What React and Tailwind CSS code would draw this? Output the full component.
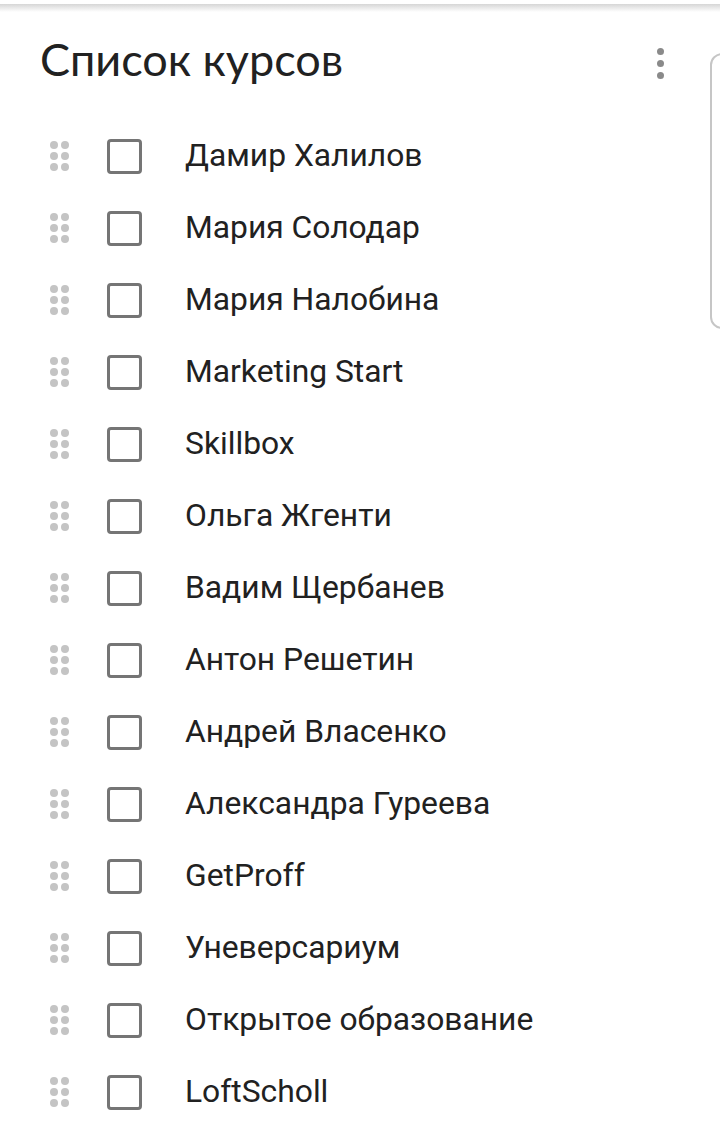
import React from "react";

const courses = [
  "Дамир Халилов",
  "Мария Солодар",
  "Мария Налобина",
  "Marketing Start",
  "Skillbox",
  "Ольга Жгенти",
  "Вадим Щербанев",
  "Антон Решетин",
  "Андрей Власенко",
  "Александра Гуреева",
  "GetProff",
  "Уневерсариум",
  "Открытое образование",
  "LoftScholl",
];

function DragHandle() {
  return (
    <div className="grid grid-cols-2 gap-x-[3px] gap-y-[3px] w-[19px]">
      {[0, 1, 2, 3, 4, 5].map((i) => (
        <span key={i} className="w-[8px] h-[8px] rounded-full bg-[#c4c4c4]" />
      ))}
    </div>
  );
}

export default function App() {
  return (
    <div
      className="relative w-[720px] h-[1127px] bg-white overflow-hidden"
      style={{ fontFamily: "Roboto, 'Noto Sans', sans-serif" }}
    >
      <div className="h-[4px] bg-white" />
      <div className="h-[8px] bg-gradient-to-b from-[#d6d6d6] to-white" />

      {/* side panel edge */}
      <div className="absolute left-[710px] top-[53px] w-[40px] h-[276px] border-2 border-[#c6c6c6] rounded-[12px]" />

      <div className="flex items-center justify-between h-[108px] pl-[40px] pr-[56px] pb-[8px]">
        <h1
          className="text-[45px] leading-none text-[#212121] font-normal -mt-[6px]"
          style={{ fontFamily: "Lato, Roboto, sans-serif" }}
        >
          Список курсов
        </h1>
        <div className="flex flex-col gap-[5px] mt-[2px]">
          <span className="w-[7px] h-[7px] rounded-full bg-[#8a8a8a]" />
          <span className="w-[7px] h-[7px] rounded-full bg-[#8a8a8a]" />
          <span className="w-[7px] h-[7px] rounded-full bg-[#8a8a8a]" />
        </div>
      </div>

      <ul className="flex flex-col">
        {courses.map((name) => (
          <li key={name} className="flex items-center h-[72px] pl-[50px]">
            <DragHandle />
            <span className="ml-[38px] w-[35px] h-[35px] border-[3px] border-[#757575] rounded-[4px]" />
            <span className="ml-[43px] text-[31.8px] text-[#212121] leading-none">
              {name}
            </span>
          </li>
        ))}
      </ul>
    </div>
  );
}
